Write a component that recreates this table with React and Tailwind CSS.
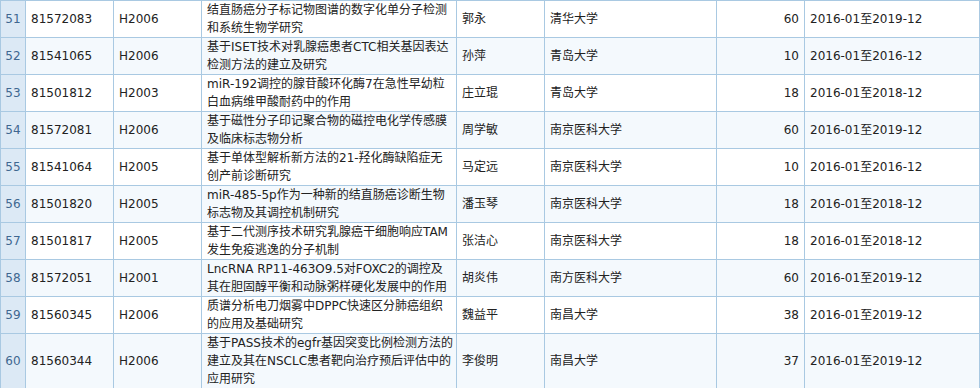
import React from 'react';

const rows = [
  ['51', '81572083', 'H2006', ['结直肠癌分子标记物图谱的数字化单分子检测', '和系统生物学研究'], '郭永', '清华大学', '60', '2016-01至2019-12'],
  ['52', '81541065', 'H2006', ['基于ISET技术对乳腺癌患者CTC相关基因表达', '检测方法的建立及研究'], '孙萍', '青岛大学', '10', '2016-01至2016-12'],
  ['53', '81501812', 'H2003', ['miR-192调控的腺苷酸环化酶7在急性早幼粒', '白血病维甲酸耐药中的作用'], '庄立琨', '青岛大学', '18', '2016-01至2018-12'],
  ['54', '81572081', 'H2006', ['基于磁性分子印记聚合物的磁控电化学传感膜', '及临床标志物分析'], '周学敏', '南京医科大学', '60', '2016-01至2019-12'],
  ['55', '81541064', 'H2005', ['基于单体型解析新方法的21-羟化酶缺陷症无', '创产前诊断研究'], '马定远', '南京医科大学', '10', '2016-01至2016-12'],
  ['56', '81501820', 'H2005', ['miR-485-5p作为一种新的结直肠癌诊断生物', '标志物及其调控机制研究'], '潘玉琴', '南京医科大学', '18', '2016-01至2018-12'],
  ['57', '81501817', 'H2005', ['基于二代测序技术研究乳腺癌干细胞响应TAM', '发生免疫逃逸的分子机制'], '张洁心', '南京医科大学', '18', '2016-01至2018-12'],
  ['58', '81572051', 'H2001', ['LncRNA RP11-463O9.5对FOXC2的调控及', '其在胆固醇平衡和动脉粥样硬化发展中的作用'], '胡炎伟', '南方医科大学', '60', '2016-01至2019-12'],
  ['59', '81560345', 'H2006', ['质谱分析电刀烟雾中DPPC快速区分肺癌组织', '的应用及基础研究'], '魏益平', '南昌大学', '38', '2016-01至2019-12'],
  ['60', '81560344', 'H2006', ['基于PASS技术的egfr基因突变比例检测方法的', '建立及其在NSCLC患者靶向治疗预后评估中的', '应用研究'], '李俊明', '南昌大学', '37', '2016-01至2019-12'],
];

function App() {
  return (
    <div className="w-[980px] bg-white font-['DejaVu_Sans','Noto_Sans_CJK_SC',sans-serif] text-[12px] leading-[18px] text-[#222]">
      <div className="grid grid-cols-[24px_87px_87px_254px_87px_171px_87px_174px] gap-px bg-[#a9c9e2] p-px">
        {rows.map((r, i) => {
          const bg = i % 2 === 0 ? 'bg-white' : 'bg-[#f4f9fd]';
          return (
            <React.Fragment key={r[0]}>
              <div className="flex items-center justify-center bg-[#dce9f5] text-[#3f6790]">{r[0]}</div>
              <div className={`${bg} flex items-center px-[5px]`}>{r[1]}</div>
              <div className={`${bg} flex items-center px-[5px]`}>{r[2]}</div>
              <div className={`${bg} flex flex-col justify-center px-[5px] whitespace-nowrap`}>
                {r[3].map((line) => (
                  <span key={line}>{line}</span>
                ))}
              </div>
              <div className={`${bg} flex items-center px-[5px]`}>{r[4]}</div>
              <div className={`${bg} flex items-center px-[5px]`}>{r[5]}</div>
              <div className={`${bg} flex items-center justify-end px-[5px]`}>{r[6]}</div>
              <div className={`${bg} flex items-center px-[5px]`}>{r[7]}</div>
            </React.Fragment>
          );
        })}
      </div>
    </div>
  );
}

export default App;
